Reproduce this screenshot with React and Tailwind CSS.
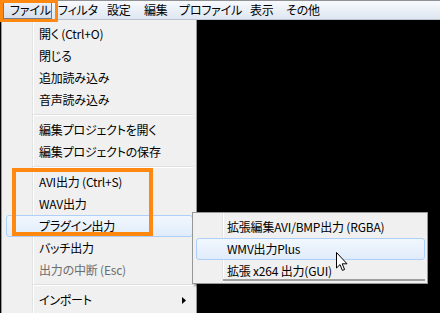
import React from 'react';

const font = { fontFamily: '"Noto Sans CJK JP", "Noto Sans", sans-serif' };

const topMenus = [
  { label: 'ファイル', w: 'w-[49px]', active: true },
  { label: 'フィルタ', w: 'w-[49px]' },
  { label: '設定', w: 'w-[37px]' },
  { label: '編集', w: 'w-[35px]' },
  { label: 'プロファイル', w: 'w-[71px]' },
  { label: '表示', w: 'w-[36px]' },
  { label: 'その他', w: 'w-[48px]' },
];

const fileItems = [
  { label: '開く (Ctrl+O)' },
  { label: '閉じる' },
  { label: '追加読み込み' },
  { label: '音声読み込み' },
  { sep: true },
  { label: '編集プロジェクトを開く' },
  { label: '編集プロジェクトの保存' },
  { sep: true },
  { label: 'AVI出力 (Ctrl+S)' },
  { label: 'WAV出力' },
  { label: 'プラグイン出力', sub: true, hot: true },
  { label: 'バッチ出力' },
  { label: '出力の中断 (Esc)', disabled: true },
  { sep: true },
  { label: 'インポート', sub: true },
];

const pluginItems = [
  { label: '拡張編集AVI/BMP出力 (RGBA)' },
  { label: 'WMV出力Plus', hot: true },
  { label: '拡張 x264 出力(GUI)' },
];

const textCls = "text-[12px] leading-none whitespace-nowrap tracking-[-0.2px] [font-feature-settings:'palt']";

function Arrow() {
  return (
    <svg width="4" height="7" viewBox="0 0 4 7" className="ml-auto mr-[10px]">
      <path d="M0 0 L4 3.5 L0 7 Z" fill="#000" />
    </svg>
  );
}

function Hot({ inset }) {
  return (
    <div
      className={`absolute ${inset} top-0 bottom-0 rounded-[3px] border border-[#aecff7] bg-gradient-to-b from-[#f2f7fd] to-[#e0ecfb]`}
    />
  );
}

function MenuItem({ item }) {
  if (item.sep) {
    return (
      <div className="h-[8px] flex items-center pl-[31px] pr-[3px]">
        <div className="w-full h-[2px] border-t border-[#e0e0e0] border-b border-b-white" />
      </div>
    );
  }
  return (
    <div className="relative h-[22px] flex items-center pl-[37px]">
      {item.hot && <Hot inset="left-[4px] right-[3px]" />}
      <span className={`relative ${textCls} ${item.disabled ? 'text-[#6d6d6d]' : 'text-black'}`}>
        {item.label}
      </span>
      {item.sub && <Arrow />}
    </div>
  );
}

function Cursor() {
  return (
    <svg width="12" height="20" viewBox="0 0 12 20" className="absolute left-[336px] top-[252px]">
      <path d="M0.5 0.5 L0.5 16 L4 12.6 L6.4 18.4 L8.6 17.5 L6.2 11.8 L11 11.8 Z" fill="#fff" stroke="#000" strokeWidth="1" />
    </svg>
  );
}

export default function App() {
  return (
    <div className="relative w-[440px] h-[313px] overflow-hidden bg-black flex flex-col select-none" style={font}>
      {/* Menu bar */}
      <div className="h-[20px] shrink-0 flex items-center border-t border-[#8e9297] border-b border-b-[#b9c3d0] bg-gradient-to-b from-[#f7f9fc] to-[#dfe7f2] pl-[3px]">
        {topMenus.map((m) => (
          <div
            key={m.label}
            className={`${m.w} h-[18px] flex items-center pl-[6px] text-black ${textCls} ${
              m.active ? 'border border-[#6e7b8c] pl-[5px] bg-gradient-to-b from-[#eef2f8] to-[#d6dfeb]' : ''
            }`}
          >
            {m.label}
          </div>
        ))}
      </div>

      {/* Body: file menu dropped over black client area */}
      <div className="flex-1 flex pl-[1px]">
        <div className="relative w-[196px] bg-[#f0f0f0] border-l border-[#979797] border-r border-r-[#979797]">
          <div className="absolute left-[30px] top-0 bottom-0 w-[2px] border-l border-[#e2e3e3] border-r border-r-white" />
          <div className="relative flex flex-col pt-[3px]">
            {fileItems.map((it, i) => (
              <MenuItem key={i} item={it} />
            ))}
          </div>
        </div>
        <div className="flex-1 bg-black" />
      </div>

      {/* Plugin submenu */}
      <div className="absolute left-[192px] top-[212px] w-[236px] h-[72px] bg-[#f0f0f0] border border-[#979797] shadow-[2px_2px_2px_rgba(0,0,0,0.35)]">
        <div className="absolute left-[29px] top-0 bottom-0 w-[2px] border-l border-[#e2e3e3] border-r border-r-white" />
        <div className="relative flex flex-col pt-[3px]">
          {pluginItems.map((it) => (
            <div key={it.label} className="relative h-[22px] flex items-center pl-[34px]">
              {it.hot && <Hot inset="left-[3px] right-[2px]" />}
              <span className={`relative text-black ${textCls}`}>{it.label}</span>
            </div>
          ))}
        </div>
        <div className="absolute left-[30px] right-[2px] bottom-[2px] h-[2px] bg-[#a0a0a0]" />
      </div>

      {/* Annotation boxes */}
      <div className="absolute left-0 top-0 w-[58px] h-[22px] border-[3px] border-[#ff8811]" />
      <div className="absolute left-[12px] top-[168px] w-[141px] h-[68px] border-[4px] border-[#ff8811]" />

      <Cursor />
    </div>
  );
}
